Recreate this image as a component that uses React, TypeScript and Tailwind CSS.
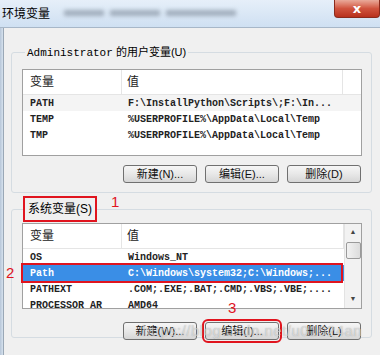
import React from 'react';

const mono = { fontFamily: '"Liberation Mono", "DejaVu Sans Mono", monospace' };
const cjk = { fontFamily: '"Liberation Sans", "Noto Sans CJK SC", sans-serif' };

const USER_VARS = [
  { name: 'PATH', value: 'F:\\InstallPython\\Scripts\\;F:\\In...', hl: true },
  { name: 'TEMP', value: '%USERPROFILE%\\AppData\\Local\\Temp' },
  { name: 'TMP', value: '%USERPROFILE%\\AppData\\Local\\Temp' },
];

const SYS_VARS = [
  { name: 'OS', value: 'Windows_NT' },
  { name: 'Path', value: 'C:\\Windows\\system32;C:\\Windows;...', selected: true },
  { name: 'PATHEXT', value: '.COM;.EXE;.BAT;.CMD;.VBS;.VBE;....' },
  { name: 'PROCESSOR_AR', value: 'AMD64' },
];

function Btn({ label, boxed }: { label: string; boxed?: boolean }) {
  return (
    <div className={`relative w-[74px] h-[18px] rounded-[3px] border border-[#707070] bg-gradient-to-b from-[#f6f6f6] via-[#e8e8e8] to-[#d6d6d6] flex items-center justify-center text-[11px] text-[#111] ${boxed ? 'outline-2 outline-[#e0141e] outline-offset-[1px]' : ''}`} style={cjk}>
      {label}
    </div>
  );
}

function Header({ scroll }: { scroll?: boolean }) {
  return (
    <div className="flex h-[25px] bg-white border-b border-[#e5e5e5] text-[12px] text-[#222]" style={cjk}>
      <div className="w-[99px] pl-[7px] flex items-center border-r border-[#e5e5e5]">变量</div>
      <div className="flex-1 pl-[5px] flex items-center border-r border-[#e5e5e5]">值</div>
      <div className={scroll ? 'w-0' : 'w-[18px]'} />
    </div>
  );
}

function Row({ name, value, hl, selected }: { name: string; value: string; hl?: boolean; selected?: boolean }) {
  return (
    <div className={`flex h-[16px] items-center text-[10px] font-bold ${selected ? 'bg-[#3a8ee6] text-white' : hl ? 'bg-[#f4f4f4] text-[#222]' : 'text-[#222]'}`} style={mono}>
      <div className="w-[99px] pl-[7px] whitespace-pre">{name}</div>
      <div className="flex-1 pl-[6px] whitespace-pre overflow-hidden">{value}</div>
    </div>
  );
}

export default function App() {
  return (
    <div className="w-[380px] h-[355px] overflow-hidden relative bg-[#f0f0f0]" style={cjk}>
      {/* title bar */}
      <div className="h-[28px] flex items-start bg-gradient-to-b from-[#e6eff9] to-[#cfe0f2] border-b border-[#a7b7c8]">
        <div className="pl-[2px] pt-[5px] text-[12px] text-black">环境变量</div>
        <div className="ml-[14px] mt-[10px] flex gap-[6px] blur-[2px] opacity-60">
          <div className="w-[40px] h-[6px] bg-[#7a8796]" />
          <div className="w-[50px] h-[6px] bg-[#7a8796]" />
          <div className="w-[70px] h-[6px] bg-[#7a8796]" />
        </div>
        <div className="ml-auto w-[46px] h-[18px] rounded-b-[4px] bg-gradient-to-b from-[#e9a99a] via-[#d0533e] to-[#b8301c] border border-[#8a2a1c] border-t-0 flex items-center justify-center text-white text-[13px] font-bold" style={{ fontFamily: '"DejaVu Sans", sans-serif' }}>
          x
        </div>
      </div>

      <div className="flex h-[327px]">
        <div className="w-[4px] bg-gradient-to-r from-[#b7c6d8] to-[#d6e2ee] border-r border-[#9aa8b6]" />
        <div className="flex-1 bg-[#f0f0f0] pl-[7px] pr-[8px] pt-[24px]">
          {/* user variables */}
          <fieldset className="border border-[#d5dce2] rounded-[3px] h-[148px] -mt-[7px] pl-[10px] pr-[9px]">
            <legend className="ml-[3px] px-[2px] text-[11px] text-black leading-[14px]">
              <span style={mono}>Administrator</span> 的用户变量(U)
            </legend>
            <div className="mt-[9px] h-[87px] bg-white border border-[#a0a0a0] overflow-hidden">
              <Header />
              {USER_VARS.map((v) => (
                <Row key={v.name} {...v} />
              ))}
            </div>
            <div className="flex justify-end gap-[8px] mt-[9px] pr-[1px]">
              <Btn label="新建(N)..." />
              <Btn label="编辑(E)..." />
              <Btn label="删除(D)" />
            </div>
          </fieldset>

          {/* system variables */}
          <fieldset className="border border-[#d5dce2] rounded-[3px] h-[140px] mt-[5px] pl-[10px] pr-[9px]">
            <legend className="ml-[3px] text-[12px] text-black leading-[22px] relative">
              <span className="outline-2 outline-[#e0141e] inline-block px-[3px]">系统变量(S)</span>
              <span className="absolute left-[86px] top-[-7px] text-[#e0141e] text-[15px]">1</span>
            </legend>
            <div className="relative mt-[3px] h-[86px] bg-white border border-[#a0a0a0] flex">
              <div className="flex-1 overflow-hidden">
                <Header scroll />
                {SYS_VARS.map((v) => (
                  <Row key={v.name} {...v} />
                ))}
              </div>
              <div className="w-[17px] bg-[#f2f2f2] border-l border-[#e3e3e3] flex flex-col items-center">
                <div className="h-[17px] flex items-center justify-center text-[7px] text-[#444]">▲</div>
                <div className="w-[15px] h-[17px] mt-[1px] rounded-[2px] border border-[#9a9a9a] bg-gradient-to-r from-[#f2f2f2] to-[#dcdcdc]" />
                <div className="mt-auto h-[17px] flex items-center justify-center text-[7px] text-[#444]">▼</div>
              </div>
              {/* selected row marker */}
              <div className="absolute left-[-2px] top-[39px] w-[322px] h-[20px] border-2 border-[#e0141e]" />
              <div className="absolute left-[-17px] top-[38px] text-[#e0141e] text-[15px]">2</div>
              <div className="absolute left-[205px] top-[76px] text-[#e0141e] text-[15px] leading-[15px]">3</div>
            </div>
            <div className="flex justify-end gap-[8px] mt-[13px] pr-[1px]">
              <Btn label="新建(W)..." />
              <Btn label="编辑(I)..." boxed />
              <Btn label="删除(L)" />
            </div>
          </fieldset>
        </div>
      </div>

      <div className="absolute left-[142px] top-[320px] text-[15px] text-white/50 tracking-[0.5px] pointer-events-none" style={{ fontFamily: '"Liberation Sans", sans-serif', textShadow: '0 0 1px rgba(90,90,90,0.5)' }}>
        https://blog.csdn.net/u01024an
      </div>
    </div>
  );
}
